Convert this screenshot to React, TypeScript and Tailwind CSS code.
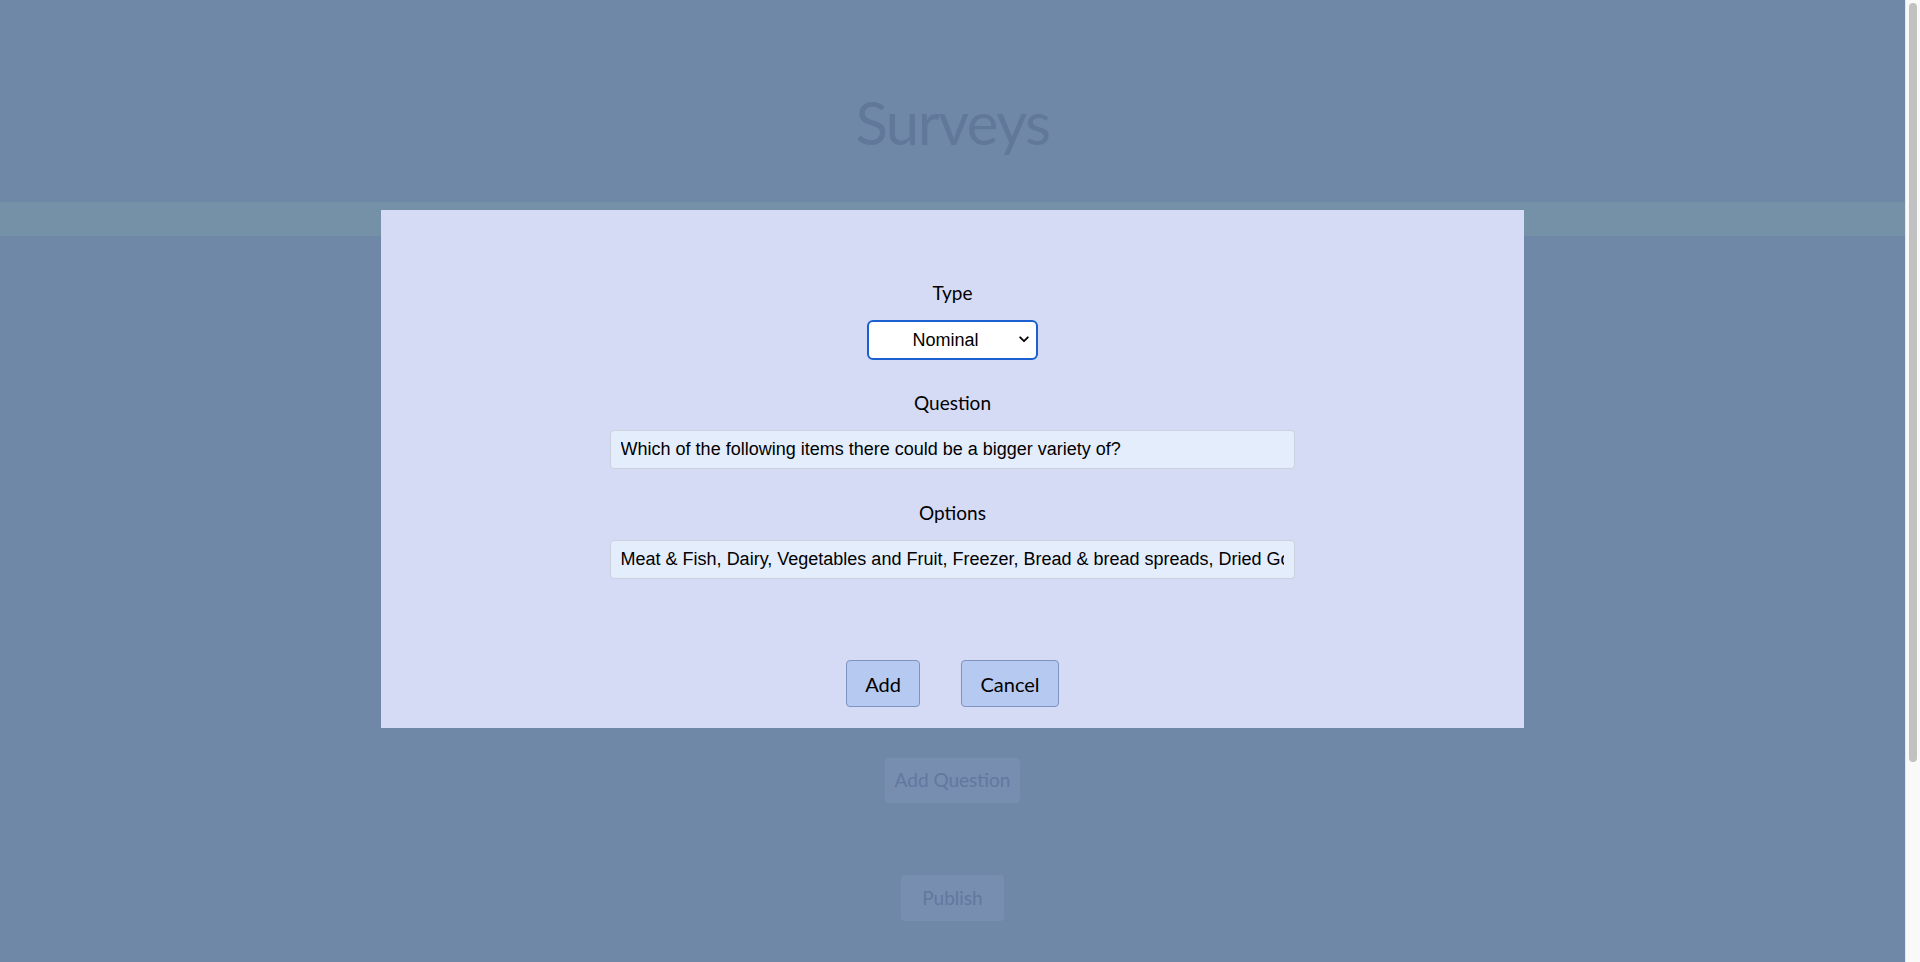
import React from "react";

export default function App() {
  const sans = { fontFamily: "Lato, 'Open Sans', sans-serif" } as React.CSSProperties;
  const arial = { fontFamily: "'Liberation Sans', Arial, sans-serif" } as React.CSSProperties;
  return (
    <div className="h-[962px] overflow-hidden flex" style={sans}>
      <main className="relative flex-1 bg-[#7088a8] flex flex-col items-center">
        <h1 className="mt-[87px] text-[60px] leading-[70px] tracking-[-1.5px] text-[#62789b] font-normal">Surveys</h1>
        <div className="mt-[45px] w-full h-[34px] bg-[#7591a7] shrink-0" />
        <div className="h-[522px] shrink-0" />
        <button className="shrink-0 h-[45px] w-[135px] rounded-[4px] bg-[#778eb0] text-[19px] text-[#62789e]">Add Question</button>
        <button className="shrink-0 mt-[72px] h-[46px] w-[103px] rounded-[4px] bg-[#778eb0] text-[19px] text-[#62789e]">Publish</button>

        <div className="absolute top-[210px] left-[20%] w-[60%] h-[518px] bg-[#d5dbf5] flex flex-col items-center pt-[71px]">
          <label className="text-[19px] leading-[24px] text-black">Type</label>
          <div className="relative mt-[15px] w-[171px] h-[40px]">
            <select
              className="appearance-none w-full h-full rounded-[6px] border-2 border-[#1b5fd1] bg-white text-[18px] text-black text-center pr-[14px] outline-none"
              style={{ ...arial, textAlignLast: "center" }}
              defaultValue="Nominal"
            >
              <option>Nominal</option>
              <option>Ordinal</option>
            </select>
            <svg className="absolute right-[9px] top-[16px] pointer-events-none" width="10" height="7" viewBox="0 0 10 7">
              <path d="M1.2 1.3 L5 5.2 L8.8 1.3" stroke="#000" strokeWidth="1.8" fill="none" strokeLinecap="round" strokeLinejoin="round" />
            </svg>
          </div>
          <label className="mt-[31px] text-[19px] leading-[24px] text-black">Question</label>
          <input
            className="mt-[15px] w-[60%] h-[39px] rounded-[4px] border border-[#cbd1dd] bg-[#e4edfc] px-[10px] text-[18px] text-black outline-none"
            style={arial}
            defaultValue="Which of the following items there could be a bigger variety of?"
          />
          <label className="mt-[32px] text-[19px] leading-[24px] text-black">Options</label>
          <input
            className="mt-[15px] w-[60%] h-[39px] rounded-[4px] border border-[#cbd1dd] bg-[#e4edfc] px-[10px] text-[18px] text-black outline-none"
            style={arial}
            defaultValue="Meat & Fish, Dairy, Vegetables and Fruit, Freezer, Bread & bread spreads, Dried Goods, Drinks, Snacks"
          />
          <div className="mt-[81px] flex gap-[41px]">
            <button className="h-[47px] w-[74px] rounded-[4px] border border-[#7f93c1] bg-[#b6c9f0] text-[20px] text-black">Add</button>
            <button className="h-[47px] w-[98px] rounded-[4px] border border-[#7f93c1] bg-[#b6c9f0] text-[20px] text-black">Cancel</button>
          </div>
        </div>
      </main>
      <div className="w-[15px] shrink-0 bg-[#f9f9f9] border-l border-[#e6e6e6] pt-[3px] pl-[3px]">
        <div className="w-[8px] h-[759px] rounded-full bg-[#c1c1c1]" />
      </div>
    </div>
  );
}
